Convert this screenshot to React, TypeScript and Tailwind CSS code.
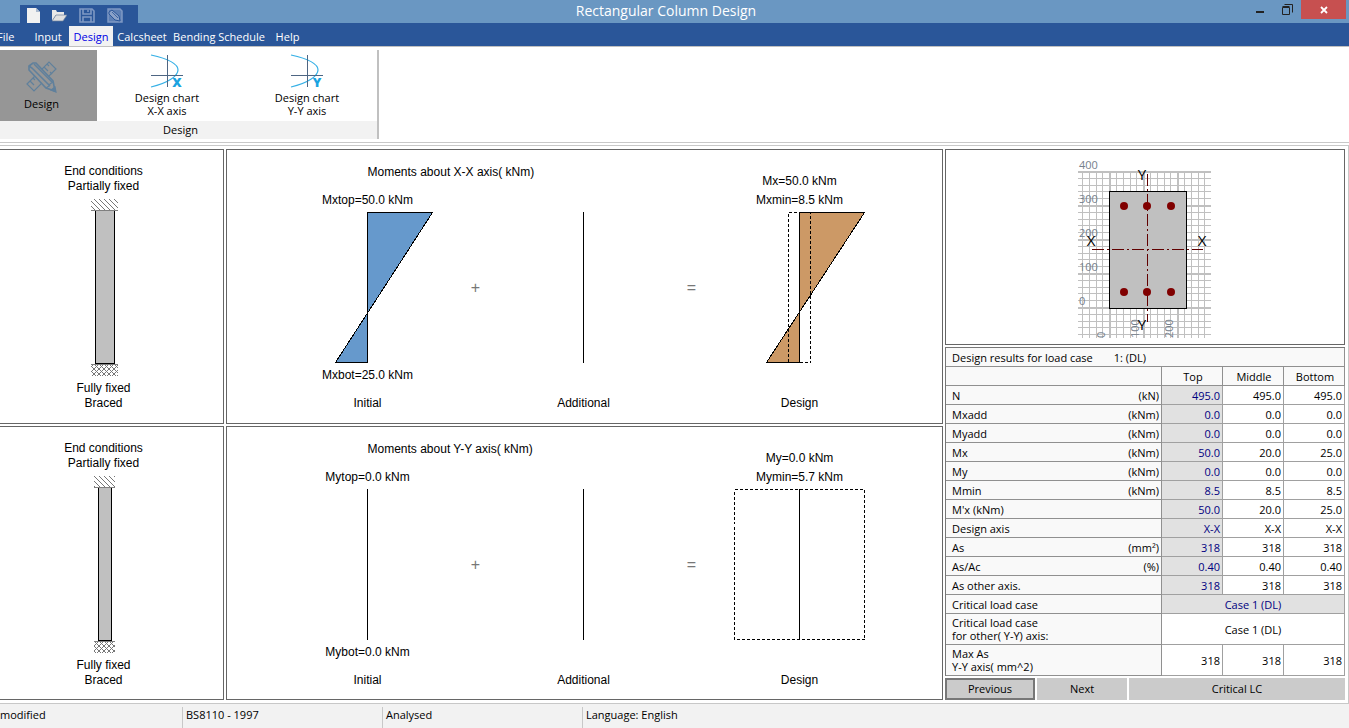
import type { ReactNode } from "react";

const menu = [
  { label: "File", box: "w-[30px] -ml-[3px]" },
  { label: "Input", box: "w-[42px] text-center" },
  { label: "Design", box: "w-11 text-center" },
  { label: "Calcsheet", box: "w-[58px] text-center" },
  { label: "Bending Schedule", box: "w-24 text-center" },
  { label: "Help", box: "w-[41px] text-center" },
];

const rows = [
  { name: "N", unit: "(kN)", values: ["495.0", "495.0", "495.0"] },
  { name: "Mxadd", unit: "(kNm)", values: ["0.0", "0.0", "0.0"] },
  { name: "Myadd", unit: "(kNm)", values: ["0.0", "0.0", "0.0"] },
  { name: "Mx", unit: "(kNm)", values: ["50.0", "20.0", "25.0"] },
  { name: "My", unit: "(kNm)", values: ["0.0", "0.0", "0.0"] },
  { name: "Mmin", unit: "(kNm)", values: ["8.5", "8.5", "8.5"] },
  { name: "M'x (kNm)", unit: "", values: ["50.0", "20.0", "25.0"] },
  { name: "Design axis", unit: "", values: ["X-X", "X-X", "X-X"] },
  { name: "As", unit: "(mm²)", values: ["318", "318", "318"] },
  { name: "As/Ac", unit: "(%)", values: ["0.40", "0.40", "0.40"] },
  { name: "As other axis.", unit: "", values: ["318", "318", "318"] },
];

const statusItems = ["BS8110 - 1997", "Analysed"];

/* ---------- Icons ---------- */

function NewIcon() {
  return (
    <svg width="13" height="15" viewBox="0 0 13 15">
      <path d="M0 0h9l4 4v11H0z" fill="#f1f1f1" />
      <path d="M9 0v4h4z" fill="#a9b9cf" />
    </svg>
  );
}

function OpenIcon() {
  return (
    <svg width="15" height="13" viewBox="0 0 15 13">
      <path d="M0 12V1h4l1 2h7v3H4z" fill="#e8e8e8" />
      <path d="M4 6h11l-4 6H0z" fill="#e0e0e0" stroke="#6b7f9c" strokeWidth="0.7" />
    </svg>
  );
}

function SaveIcon() {
  return (
    <svg width="16" height="15" viewBox="0 0 16 15" fill="none" stroke="#7f99c4" strokeWidth="1.600">
      <path d="M1 1h12l2 2v11H1z" />
      <path d="M4 1v5h8V1M4 14V9h8v5" />
      <path d="M8 3h2" />
    </svg>
  );
}

function SaveAsIcon() {
  return (
    <svg width="16" height="15" viewBox="0 0 16 15" fill="none">
      <path d="M1 1h12l2 2v11H1z" fill="#5d7fb4" stroke="#7f99c4" strokeWidth="1.500" />
      <path d="M2 4l3-2 7 6 1 5-5-1-6-6z" fill="#8aa1c8" stroke="#2a5699" />
      <path d="M5 4l6 6" stroke="#2a5699" strokeWidth="0.800" />
    </svg>
  );
}

function RulerPencilIcon() {
  return (
    <svg width="32" height="32" viewBox="0 0 32 32" fill="none" stroke="#60809c" strokeWidth="1.200">
      <path d="M1 23 23 1l7 7L8 30z" />
      <path d="M4 20l4 4M7 17l2 2M18 6l4 4M21 3l2 2M24 11l2 2" />
      <path d="M3 9V5l4-3h3l17 18 2 10-9-3z" fill="#969696" strokeWidth="1.600" />
      <path d="M3 5l3 2 18 18M8 3l18 18" strokeWidth="1.600" />
      <path d="M20 27l3-2 1-2 3-2" />
      <path d="M30 31l-1-5-4 3z" fill="#60809c" />
    </svg>
  );
}

function ChartIcon({ axis }: { axis: string }) {
  return (
    <svg width="34" height="34" viewBox="0 0 34 34" fill="none" className="overflow-visible">
      <path d="M1 1C19 5 28 10 28 16S18 29 1 33" stroke="#35b0e6" strokeWidth="1.200" />
      <path d="M17.500 1v32M1 21.500h32" stroke="#4e6683" />
      <text
        x="27"
        y="33"
        textAnchor="middle"
        fontSize="13"
        fontWeight="800"
        fill="#1aa3e0"
        fontFamily="Open Sans, sans-serif"
      >
        {axis}
      </text>
    </svg>
  );
}

/* ---------- Header ---------- */

function TitleBar() {
  return (
    <header className="flex h-[23px] items-start bg-[#6a97c2]">
      <div className="ml-5 mt-[5px] flex h-[18px] w-[118px] items-center gap-3 bg-[#2a5699] pl-[7px] pt-[2px]">
        <button aria-label="New"><NewIcon /></button>
        <button aria-label="Open"><OpenIcon /></button>
        <button aria-label="Save"><SaveIcon /></button>
        <button aria-label="Save as"><SaveAsIcon /></button>
      </div>
      <h1 className="flex-1 text-center text-[14px] leading-[22px] text-white">
        Rectangular Column Design
      </h1>
      <div className="flex w-[155px] items-start justify-end pr-[3px]">
        <button aria-label="Minimise" className="flex h-5 w-[26px] items-center justify-center">
          <svg width="8" height="8"><path d="M0 5h8v2H0z" fill="#222" /></svg>
        </button>
        <button aria-label="Restore" className="flex h-[19px] w-7 items-center justify-center">
          <svg width="11" height="11" fill="none" stroke="#222">
            <path d="M.5 3.500h7v7h-7zM.5 2.500h7M2.500.5h8v8" />
          </svg>
        </button>
        <button aria-label="Close" className="flex h-[19px] w-[45px] items-center justify-center bg-[#c75050]">
          <svg width="8" height="8" stroke="#fff" strokeWidth="1.800"><path d="M1 1l6 6M7 1l-6 6" /></svg>
        </button>
      </div>
    </header>
  );
}

function MenuBar() {
  return (
    <nav className="flex h-6 items-end overflow-hidden border-b border-[#c0c0c0] bg-[#2a5699]">
      {menu.map(({ label, box }) => (
        <a
          key={label}
          href="#"
          className={`h-5 whitespace-nowrap leading-[21px] ${box} ${
            label === "Design" ? "bg-[#f2f2f2] text-[#0000e6]" : "text-white"
          }`}
        >
          {label}
        </a>
      ))}
    </nav>
  );
}

function Ribbon() {
  return (
    <section className="h-24 border-b border-[#c8c8c8] bg-white pt-[3px]">
      <div className="w-[379px] border-r-2 border-[#c0c0c0]">
        <div className="flex h-[71px]">
          <button className="flex w-[97px] flex-col items-center bg-[#969696] pr-[14px] pt-[11px] leading-[13px]">
            <RulerPencilIcon />
            <span className="mt-1">Design</span>
          </button>
          {["X", "Y"].map((axis) => (
            <button key={axis} className="flex w-[140px] flex-col items-center pt-1 leading-[13px]">
              <ChartIcon axis={axis} />
              <span className="mt-[3px]">Design chart</span>
              <span>{`${axis}-${axis} axis`}</span>
            </button>
          ))}
        </div>
        <div className="h-[18px] bg-[#f2f2f2] pr-4 text-center leading-[18px]">Design</div>
      </div>
    </section>
  );
}

/* ---------- Column end conditions ---------- */

function Support({ x, y, width, crossed }: { x: number; y: number; width: number; crossed?: boolean }) {
  return (
    <rect x={x} y={y} width={width} height="11" fill={crossed ? "url(#cross)" : "url(#hatch)"} />
  );
}

function EndConditions({ width }: { width: number }) {
  const left = 61 - width / 2;
  return (
    <section className="flex flex-col items-center border-y border-r border-[#666] bg-white pr-4 pt-[14px] font-['Liberation_Sans',sans-serif] text-xs leading-[15px]">
      <p>End conditions</p>
      <p>Partially fixed</p>
      <svg width="120" height="187" viewBox="0 0 120 187" shapeRendering="crispEdges">
        <defs>
          <pattern id="hatch" width="5" height="5" patternUnits="userSpaceOnUse">
            <path d="M0 0l5 5" stroke="#777" />
          </pattern>
          <pattern id="cross" width="5" height="5" patternUnits="userSpaceOnUse">
            <path d="M0 0l5 5M5 0l-5 5" stroke="#777" />
          </pattern>
        </defs>
        <Support x={left - 4} y={5} width={width + 7} />
        <rect x={left + 0.5} y="16.500" width={width - 1} height="153" fill="#c0c0c0" stroke="#000" />
        <path d={`M${left - 4} 16.500h${width + 7}M${left - 4} 170.500h${width + 7}`} stroke="#808080" />
        <Support x={left - 4} y={171} width={width + 7} crossed />
      </svg>
      <p>Fully fixed</p>
      <p>Braced</p>
    </section>
  );
}

/* ---------- Moment diagrams ---------- */

type DiagramProps = { top?: string; bottom?: string; caption: string; children?: ReactNode };

function Diagram({ top, bottom, caption, children }: DiagramProps) {
  return (
    <div className="flex w-[150px] flex-col items-center">
      <p className="h-4 whitespace-nowrap">{top}</p>
      <svg width="150" height="159" viewBox="0 1 150 159" fill="none" stroke="#000" shapeRendering="crispEdges">
        {children}
        <path d="M74.500 5v151" />
      </svg>
      <p className="h-4 whitespace-nowrap">{bottom}</p>
      <p className="mt-3 h-4">{caption}</p>
    </div>
  );
}

function Operator({ sign }: { sign: string }) {
  return (
    <div className="mt-4 flex h-40 w-[66px] items-center justify-center text-base text-[#777]">{sign}</div>
  );
}

type MomentsProps = {
  axis: string;
  top: string;
  bottom: string;
  moment: string;
  minimum: string;
  initial?: ReactNode;
  design: ReactNode;
};

function Moments({ axis, top, bottom, moment, minimum, initial, design }: MomentsProps) {
  return (
    <section className="flex justify-center border border-[#666] bg-white pr-[2px] font-['Liberation_Sans',sans-serif] text-xs leading-4">
      <div className="pt-[14px]">
        <h2 className="mb-3 pl-[75px]">{`Moments about ${axis}-${axis} axis( kNm)`}</h2>
        <div className="flex">
          <Diagram top={top} bottom={bottom} caption="Initial">{initial}</Diagram>
          <Operator sign="+" />
          <Diagram caption="Additional" />
          <Operator sign="=" />
        </div>
      </div>
      <div className="pt-[23px]">
        <p className="mb-[3px] text-center">{moment}</p>
        <Diagram top={minimum} caption="Design">{design}</Diagram>
      </div>
    </section>
  );
}

/* ---------- Cross section ---------- */

const gridX = Array.from({ length: 19 }, (_, i) => Math.round(12 + i * 6.8));
const gridY = Array.from({ length: 25 }, (_, i) => Math.round(16 + i * 6.8));

function CrossSection() {
  return (
    <section className="flex h-[196px] justify-center border border-[#666] bg-white pt-[5px]">
      <svg width="150" height="186" viewBox="0 0 150 186" shapeRendering="crispEdges">
        <g fill="#c0c0c0">
          {gridX.map((x, i) => (
            <rect key={x} x={x} y="16" width={i % 5 === 4 ? 2 : 1} height="167" />
          ))}
          {gridY.map((y, i) => (
            <rect key={y} x="8" y={y} width="133" height={i % 5 === 0 ? 2 : 1} />
          ))}
        </g>
        <g fill="#75808c" fontSize="11">
          {[400, 300, 200, 100, 0].map((n, i) => (
            <text key={n} x="9" y={14 + i * 34}>{n}</text>
          ))}
          {[0, 100, 200].map((n, i) => (
            <text key={n} transform={`translate(${35 + i * 34} 183) rotate(-90)`}>{n}</text>
          ))}
        </g>
        <rect x="39.500" y="36.500" width="77" height="117" fill="#c0c0c0" stroke="#000" />
        <path d="M22 94.500h111M77.500 19v148" stroke="#600000" strokeDasharray="12 3 2 3" />
        <g fill="#800000" shapeRendering="auto">
          {[51, 137].map((y) => [54, 77, 101].map((x) => <circle key={`${x}-${y}`} cx={x} cy={y} r="4" />))}
        </g>
        <g fontSize="15" textAnchor="middle">
          <text x="72" y="25">Y</text>
          <text x="72" y="175">Y</text>
          <text x="21" y="91">X</text>
          <text x="132" y="91">X</text>
        </g>
      </svg>
    </section>
  );
}

/* ---------- Results ---------- */

function Results() {
  return (
    <table className="w-full table-fixed border-separate border-spacing-0 border-l border-t border-[#777] bg-white text-right leading-4 [&_td]:border-b [&_td]:border-r [&_td]:border-[#a0a0a0] [&_td]:px-[2px] [&_td]:pt-[2px] [&_th]:border-b [&_th]:border-r [&_th]:border-[#909090] [&_th]:bg-[#f9f9f9] [&_th]:font-normal">
      <colgroup>
        <col />
        <col className="w-[61px]" />
        <col className="w-[61px]" />
        <col className="w-[61px]" />
      </colgroup>
      <thead>
        <tr>
          <th colSpan={4} className="pl-1.5 pt-[2px] text-left">
            Design results for load case <span className="ml-[18px]">1: (DL)</span>
          </th>
        </tr>
        <tr>
          <th />
          <th className="pl-[2px] pt-[2px] text-center">Top</th>
          <th className="pl-[2px] pt-[2px] text-center">Middle</th>
          <th className="pl-[2px] pt-[2px] text-center">Bottom</th>
        </tr>
      </thead>
      <tbody>
        {rows.map((row) => (
          <tr key={row.name}>
            <th scope="row" className="pl-1.5 pr-[2px] pt-[2px]">
              <div className="flex h-4 justify-between">
                <span>{row.name}</span>
                <span>{row.unit}</span>
              </div>
            </th>
            <td className="bg-[#e1e1e1] text-[#000080]">{row.values[0]}</td>
            <td>{row.values[1]}</td>
            <td>{row.values[2]}</td>
          </tr>
        ))}
        <tr>
          <th scope="row" className="pl-1.5 pt-[2px] text-left">Critical load case</th>
          <td colSpan={3} className="bg-[#e1e1e1] text-center text-[#000080]">Case 1 (DL)</td>
        </tr>
        <tr>
          <th scope="row" className="h-[31px] pl-1.5 text-left leading-[13px]">
            Critical load case
            <br />
            for other( Y-Y) axis:
          </th>
          <td colSpan={3} className="text-center">Case 1 (DL)</td>
        </tr>
        <tr>
          <th scope="row" className="h-[31px] pl-1.5 text-left leading-[13px]">
            Max As
            <br />
            Y-Y axis( mm^2)
          </th>
          <td>318</td>
          <td>318</td>
          <td>318</td>
        </tr>
      </tbody>
    </table>
  );
}

export default function App() {
  return (
    <div className="flex min-h-screen flex-col bg-white font-['Open_Sans','Noto_Sans',sans-serif] text-[11px] text-black">
      <TitleBar />
      <MenuBar />
      <Ribbon />
      <main className="mt-[2px] grid flex-1 grid-cols-[224px_minmax(584px,1fr)_400px] gap-[2px] border-y border-r border-[#c8c8c8] pb-[3px] pr-[3px] pt-[3px]">
        <div className="grid grid-rows-2 gap-[2px]">
          <EndConditions width={20} />
          <EndConditions width={14} />
        </div>
        <div className="grid grid-rows-2 gap-[2px]">
          <Moments
            axis="X"
            top="Mxtop=50.0 kNm"
            bottom="Mxbot=25.0 kNm"
            moment="Mx=50.0 kNm"
            minimum="Mxmin=8.5 kNm"
            initial={<path d="M74.500 5.500h65L42.500 155.500h32z" fill="#6699cc" />}
            design={
              <>
                <path d="M74.500 5.500h65L41.500 155.500h33z" fill="#cc9966" />
                <path d="M63.500 5.500h22v150h-22z" strokeDasharray="3 2" />
              </>
            }
          />
          <Moments
            axis="Y"
            top="Mytop=0.0 kNm"
            bottom="Mybot=0.0 kNm"
            moment="My=0.0 kNm"
            minimum="Mymin=5.7 kNm"
            design={<path d="M9.500 5.500h130v150H9.500z" strokeDasharray="3 2" />}
          />
        </div>
        <aside className="flex flex-col gap-[2px]">
          <CrossSection />
          <Results />
          <div className="grid h-[22px] grid-cols-[90px_90px_1fr] gap-[2px]">
            <button className="border-2 border-[#777] bg-[#cbcbcb]">Previous</button>
            <button className="bg-[#cbcbcb]">Next</button>
            <button className="bg-[#cbcbcb]">Critical LC</button>
          </div>
        </aside>
      </main>
      <footer className="flex h-6 items-end bg-[#f2f2f2] leading-4">
        <span className="h-[21px] w-[182px]">modified</span>
        {statusItems.map((item) => (
          <span key={item} className="h-[21px] w-[200px] border-l border-[#c8c8c8] pl-[3px]">{item}</span>
        ))}
        <span className="h-[21px] border-l border-[#c8c8c8] pl-[3px]">Language: English</span>
      </footer>
    </div>
  );
}
